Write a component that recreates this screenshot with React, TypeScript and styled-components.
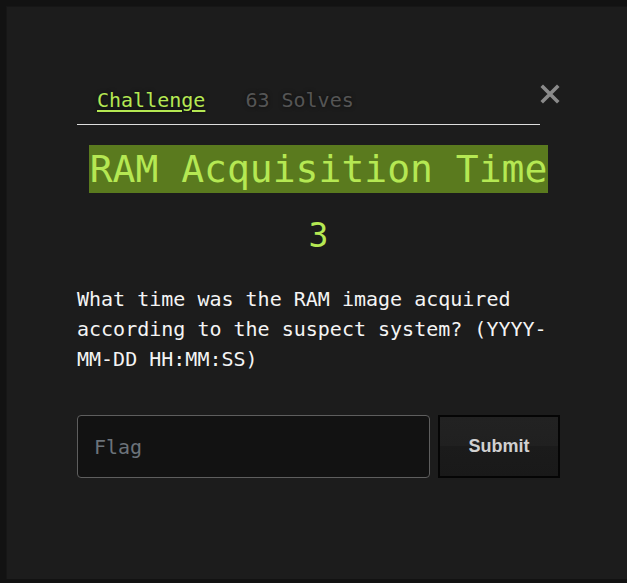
import React from "react";
import styled, { createGlobalStyle } from "styled-components";

const Global = createGlobalStyle`
  html, body { margin: 0; padding: 0; background: #121212; }
  body { font-family: "DejaVu Sans Mono", "Liberation Mono", monospace; }
  * { box-sizing: border-box; }
`;

const Modal = styled.div`
  margin: 6px 0 0 6px;
  height: 573px;
  background: #1c1c1c;
  border-left: 1px solid #161616;
  border-top: 1px solid #161616;
  overflow: hidden;
`;

const Content = styled.div`
  width: 483px;
  margin-left: 70px;
  padding-top: 71px;
  display: flex;
  flex-direction: column;
  align-items: stretch;
`;

const Header = styled.div`
  display: flex;
  align-items: flex-start;
  justify-content: space-between;
`;

const Nav = styled.nav`
  width: 465px;
  display: flex;
  border-bottom: 1px solid #dddddd;
`;

const Tab = styled.a<{ $active?: boolean }>`
  padding: 10px 20px 12px;
  font-size: 20px;
  line-height: 24px;
  color: ${(p) => (p.$active ? "#b5e853" : "#555555")};
  text-decoration: ${(p) => (p.$active ? "underline" : "none")};
  text-underline-offset: 3px;
  text-decoration-thickness: 2px;
  text-shadow: 0 0 4px rgba(0, 0, 0, 0.6);
  cursor: pointer;
`;

const Close = styled.button`
  margin-top: 6px;
  width: 20px;
  height: 20px;
  padding: 0;
  border: none;
  background: none;
  display: flex;
  cursor: pointer;
`;

const Title = styled.h2`
  margin: 20px auto 0;
  padding: 0 1px;
  font-size: 38px;
  font-weight: normal;
  line-height: 48px;
  color: #b5e853;
  background: #5a7a1e;
  white-space: nowrap;
`;

const Value = styled.h4`
  margin: 23px 0 0;
  text-align: center;
  font-size: 33px;
  font-weight: normal;
  line-height: 40px;
  color: #b5e853;
`;

const Description = styled.p`
  margin: 28px 0 0;
  font-size: 20px;
  line-height: 30px;
  color: #f4f4f4;
`;

const Form = styled.form`
  margin-top: 41px;
  display: flex;
  gap: 8px;
`;

const Input = styled.input`
  flex: 1;
  height: 63px;
  padding: 0 16px;
  background: #121212;
  border: 1px solid #5e5e5e;
  border-radius: 4px;
  color: #eee;
  font-family: "DejaVu Sans Mono", "Liberation Mono", monospace;
  font-size: 20px;
  outline: none;
  &::placeholder { color: #6c737a; }
`;

const Submit = styled.button`
  width: 122px;
  height: 63px;
  border: 2px solid #050505;
  background: linear-gradient(#222222 0%, #202020 50%, #1b1b1b 50%, #191919 100%);
  color: #d0d0d0;
  font-family: "Liberation Sans", Arial, sans-serif;
  font-weight: bold;
  font-size: 18px;
  cursor: pointer;
`;

export default function App() {
  return (
    <>
      <Global />
      <Modal>
        <Content>
          <Header>
            <Nav>
              <Tab $active>Challenge</Tab>
              <Tab>63 Solves</Tab>
            </Nav>
            <Close aria-label="Close">
              <svg width="20" height="20" viewBox="0 0 20 20">
                <path d="M3 3 L17 17 M17 3 L3 17" stroke="#8a8a8a" strokeWidth="3.6" strokeLinecap="square" />
              </svg>
            </Close>
          </Header>
          <Title>RAM Acquisition Time</Title>
          <Value>3</Value>
          <Description>
            What time was the RAM image acquired according to the suspect system? (YYYY-MM-DD HH:MM:SS)
          </Description>
          <Form onSubmit={(e) => e.preventDefault()}>
            <Input placeholder="Flag" />
            <Submit type="submit">Submit</Submit>
          </Form>
        </Content>
      </Modal>
    </>
  );
}
